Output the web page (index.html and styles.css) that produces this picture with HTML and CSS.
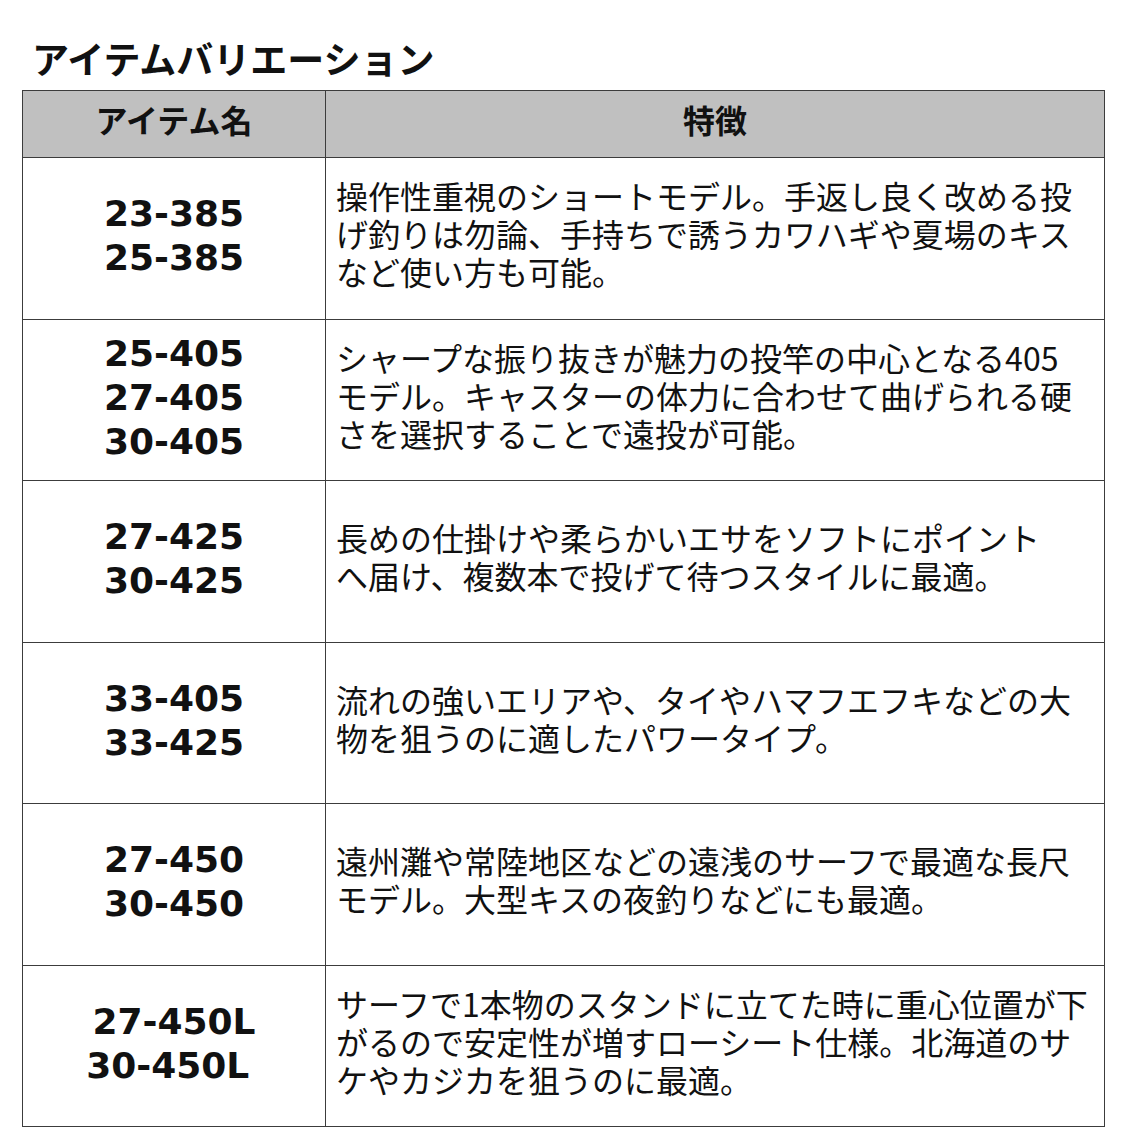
FILE: index.html
```html
<!DOCTYPE html>
<html lang="ja">
<head>
<meta charset="utf-8">
<link rel="stylesheet" href="styles.css">
</head>
<body>
<h1 class="title">アイテムバリエーション</h1>
<table class="variations">
  <thead>
    <tr>
      <th class="col-name">アイテム名</th>
      <th class="col-desc">特徴</th>
    </tr>
  </thead>
  <tbody>
    <tr>
      <td class="name">23-385<br>25-385</td>
      <td class="desc">操作性重視のショートモデル。手返し良く改める投<br>げ釣りは勿論、手持ちで誘うカワハギや夏場のキス<br>など使い方も可能。</td>
    </tr>
    <tr>
      <td class="name">25-405<br>27-405<br>30-405</td>
      <td class="desc">シャープな振り抜きが魅力の投竿の中心となる405<br>モデル。キャスターの体力に合わせて曲げられる硬<br>さを選択することで遠投が可能。</td>
    </tr>
    <tr>
      <td class="name">27-425<br>30-425</td>
      <td class="desc">長めの仕掛けや柔らかいエサをソフトにポイント<br>へ届け、複数本で投げて待つスタイルに最適。</td>
    </tr>
    <tr>
      <td class="name">33-405<br>33-425</td>
      <td class="desc">流れの強いエリアや、タイやハマフエフキなどの大<br>物を狙うのに適したパワータイプ。</td>
    </tr>
    <tr>
      <td class="name">27-450<br>30-450</td>
      <td class="desc">遠州灘や常陸地区などの遠浅のサーフで最適な長尺<br>モデル。大型キスの夜釣りなどにも最適。</td>
    </tr>
    <tr>
      <td class="name">27-450L<br>30-450L&nbsp;</td>
      <td class="desc">サーフで1本物のスタンドに立てた時に重心位置が下<br>がるので安定性が増すローシート仕様。北海道のサ<br>ケやカジカを狙うのに最適。</td>
    </tr>
  </tbody>
</table>
</body>
</html>
```

FILE: styles.css
```css
html, body {
  margin: 0;
  padding: 0;
  background: #ffffff;
}

body {
  width: 1134px;
  height: 1134px;
  overflow: hidden;
  color: #111111;
  font-family: "Noto Sans CJK JP", "Noto Sans", sans-serif;
}

.title {
  margin: 0 0 10px 32px;
  padding-top: 36px;
  font-size: 37px;
  line-height: 44px;
  font-weight: 700;
  color: #111111;
}

.variations {
  margin-left: 22px;
  width: 1083px;
  border-collapse: collapse;
  table-layout: fixed;
}

.variations th,
.variations td {
  border: 1px solid #3c3c3c;
  padding: 0;
  vertical-align: middle;
}

.variations th {
  background: #c0c0c0;
  height: 56px;
  padding-bottom: 10px;
  font-size: 32px;
  line-height: 40px;
  font-weight: 700;
  text-align: center;
  color: #111111;
}

.col-name {
  width: 302px;
}

.variations td {
  height: 150.5px;
  padding-bottom: 10px;
}

.variations td.name {
  height: 156.5px;
  padding-bottom: 4px;
  text-align: center;
  font-family: "DejaVu Sans", "Noto Sans CJK JP", sans-serif;
  font-weight: 700;
  font-size: 36px;
  line-height: 44px;
}

.desc {
  padding-left: 10px !important;
  font-size: 32px;
  line-height: 38px;
  text-align: left;
  white-space: nowrap;
}
```
